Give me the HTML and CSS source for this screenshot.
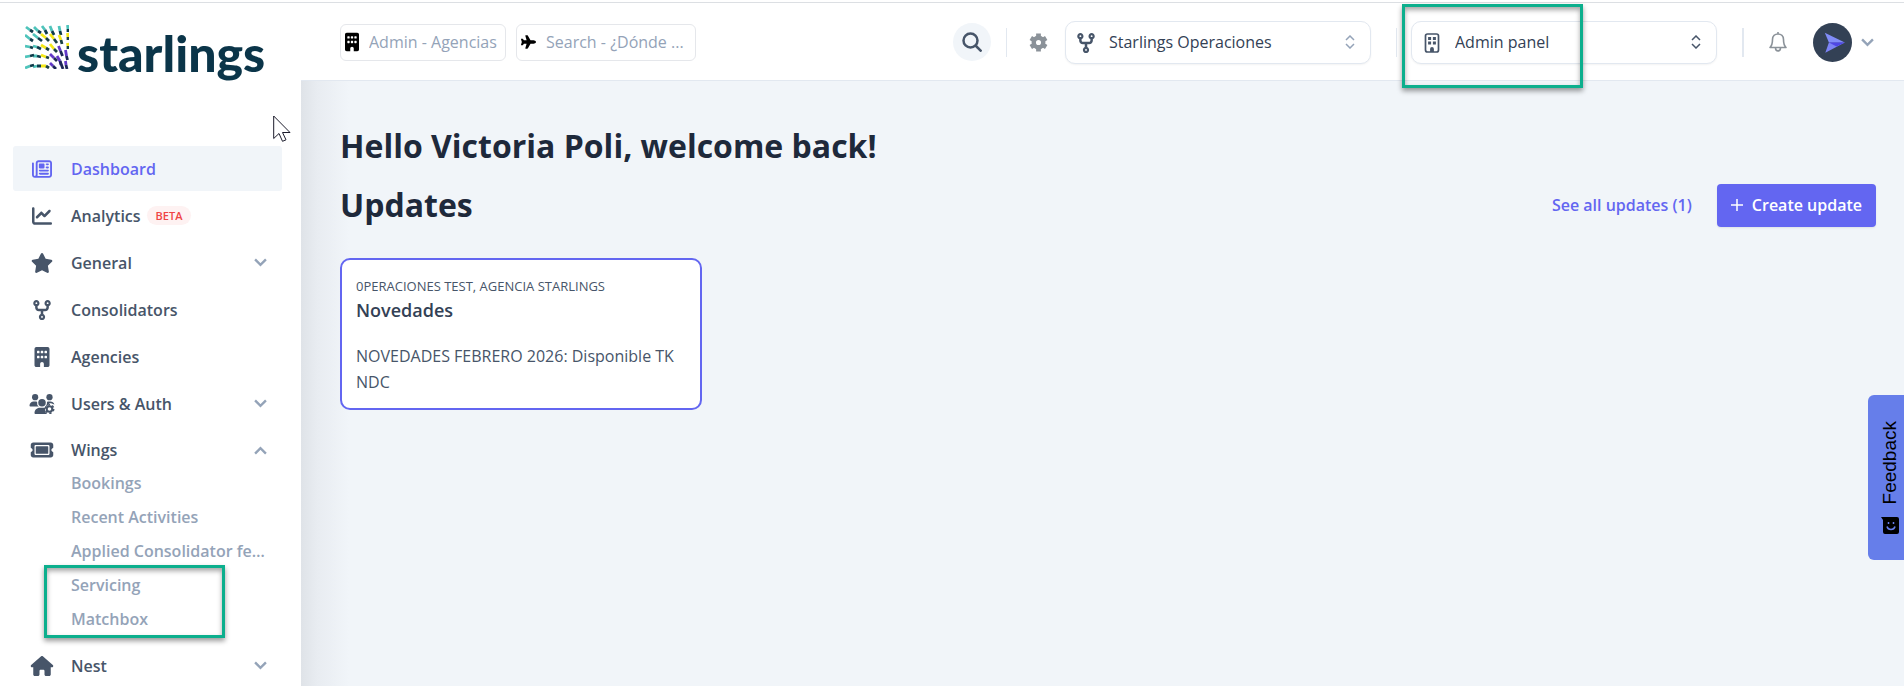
FILE: index.html
```html
<!DOCTYPE html>
<html lang="en">
<head>
  <meta charset="UTF-8" />
  <meta name="viewport" content="width=device-width, initial-scale=1" />
  <title>Starlings - Dashboard</title>
  <link rel="stylesheet" href="styles.css">
</head>
<body>

<!-- Icons -->
<svg class="sprite" aria-hidden="true">
  <symbol id="i-news" viewBox="0 0 512 512"><path d="M168 80c-13.3 0-24 10.7-24 24V408c0 8.4-1.4 16.5-4.1 24H440c13.3 0 24-10.7 24-24V104c0-13.3-10.7-24-24-24H168zM72 480c-39.8 0-72-32.2-72-72V112C0 98.7 10.7 88 24 88s24 10.7 24 24V408c0 13.3 10.7 24 24 24s24-10.7 24-24V104c0-39.8 32.2-72 72-72H440c39.8 0 72 32.2 72 72V408c0 39.8-32.2 72-72 72H72zM176 136c0-13.3 10.7-24 24-24h96c13.3 0 24 10.7 24 24v80c0 13.3-10.7 24-24 24H200c-13.3 0-24-10.7-24-24V136zm200-24h32c13.3 0 24 10.7 24 24s-10.7 24-24 24H376c-13.3 0-24-10.7-24-24s10.7-24 24-24zm0 80h32c13.3 0 24 10.7 24 24s-10.7 24-24 24H376c-13.3 0-24-10.7-24-24s10.7-24 24-24zM200 272H408c13.3 0 24 10.7 24 24s-10.7 24-24 24H200c-13.3 0-24-10.7-24-24s10.7-24 24-24zm0 80H408c13.3 0 24 10.7 24 24s-10.7 24-24 24H200c-13.3 0-24-10.7-24-24s10.7-24 24-24z"/></symbol>
  <symbol id="i-chart" viewBox="0 0 512 512"><path d="M64 64c0-17.7-14.3-32-32-32S0 46.3 0 64V400c0 44.2 35.8 80 80 80H480c17.7 0 32-14.3 32-32s-14.3-32-32-32H80c-8.8 0-16-7.2-16-16V64zm406.6 86.6c12.5-12.5 12.5-32.8 0-45.3s-32.8-12.5-45.3 0L320 210.7l-57.4-57.4c-12.5-12.5-32.8-12.5-45.3 0l-112 112c-12.5 12.5-12.5 32.8 0 45.3s32.8 12.5 45.3 0L240 221.3l57.4 57.4c12.5 12.5 32.8 12.5 45.3 0l128-128z"/></symbol>
  <symbol id="i-star" viewBox="0 0 576 512"><path d="M316.9 18C311.6 7 300.4 0 288.1 0s-23.4 7-28.8 18L195 150.3 51.4 171.5c-12 1.8-22 10.2-25.7 21.7s-.7 24.2 7.9 32.7L137.8 329 113.2 474.7c-2 12 3 24.2 12.9 31.3s23 8 33.8 2.3l128.3-68.5 128.3 68.5c10.8 5.7 23.9 4.9 33.8-2.3s14.9-19.3 12.9-31.3L438.5 329 542.7 225.9c8.6-8.5 11.7-21.2 7.9-32.7s-13.7-19.9-25.7-21.7L381.2 150.3 316.9 18z"/></symbol>
  <symbol id="i-fork" viewBox="0 0 448 512"><path d="M80 104a24 24 0 1 0 0-48 24 24 0 1 0 0 48zm80-24c0 32.8-19.7 61-48 73.3V192c0 17.7 14.3 32 32 32H304c17.7 0 32-14.3 32-32V153.3C307.7 141 288 112.8 288 80c0-44.2 35.8-80 80-80s80 35.8 80 80c0 32.8-19.7 61-48 73.3V192c0 53-43 96-96 96H256v70.7c28.3 12.3 48 40.5 48 73.3c0 44.2-35.8 80-80 80s-80-35.8-80-80c0-32.8 19.7-61 48-73.3V288H144c-53 0-96-43-96-96V153.3C19.7 141 0 112.8 0 80C0 35.8 35.8 0 80 0s80 35.8 80 80zm208 24a24 24 0 1 0 0-48 24 24 0 1 0 0 48zM248 432a24 24 0 1 0 -48 0 24 24 0 1 0 48 0z"/></symbol>
  <symbol id="i-building" viewBox="0 0 384 512"><path d="M48 0C21.5 0 0 21.5 0 48V464c0 26.5 21.5 48 48 48h96V432c0-26.5 21.5-48 48-48s48 21.5 48 48v80h96c26.5 0 48-21.5 48-48V48c0-26.5-21.5-48-48-48H48zM64 240c0-8.8 7.2-16 16-16h32c8.8 0 16 7.2 16 16v32c0 8.8-7.2 16-16 16H80c-8.8 0-16-7.2-16-16V240zm112-16h32c8.8 0 16 7.2 16 16v32c0 8.8-7.2 16-16 16H176c-8.8 0-16-7.2-16-16V240c0-8.8 7.2-16 16-16zm80 16c0-8.8 7.2-16 16-16h32c8.8 0 16 7.2 16 16v32c0 8.8-7.2 16-16 16H272c-8.8 0-16-7.2-16-16V240zM80 96h32c8.8 0 16 7.2 16 16v32c0 8.8-7.2 16-16 16H80c-8.8 0-16-7.2-16-16V112c0-8.8 7.2-16 16-16zm80 16c0-8.8 7.2-16 16-16h32c8.8 0 16 7.2 16 16v32c0 8.8-7.2 16-16 16H176c-8.8 0-16-7.2-16-16V112zM272 96h32c8.8 0 16 7.2 16 16v32c0 8.8-7.2 16-16 16H272c-8.8 0-16-7.2-16-16V112c0-8.8 7.2-16 16-16z"/></symbol>
  <symbol id="i-building-o" viewBox="0 0 15 20">
    <rect x="1" y="1" width="13" height="18" rx="2" fill="none" stroke="currentColor" stroke-width="1.7"/>
    <path d="M3.6 4h3v3h-3zM8.4 4h3v3h-3zM3.6 8.6h3v3h-3zM8.4 8.6h3v3h-3zM5.6 19v-3a1.9 1.9 0 0 1 3.8 0v3z"/>
  </symbol>
  <symbol id="i-users" viewBox="0 0 640 512">
    <circle cx="144" cy="80" r="80"/><circle cx="512" cy="80" r="80"/><circle cx="320" cy="224" r="96"/>
    <path d="M0 299c0-59 48-107 107-107h43c16 0 31 4 45 10a128 128 0 0 0 42 118H21c-12 0-21-10-21-21zM405 320c28-24 45-60 43-118 13-6 28-10 43-10h43c50 0 90 30 104 76l-38-14c-60-30-100-10-130 30l-20 36zM128 485c0-74 60-133 133-133h118c10 0 20 1 28 3-25 60-5 120 44 157H155c-15 0-27-12-27-27z"/>
    <g fill="none" stroke="currentColor"><circle cx="512" cy="384" r="72" stroke-width="52"/><circle cx="512" cy="384" r="108" stroke-width="40" stroke-dasharray="58 55"/></g>
  </symbol>
  <symbol id="i-ticket" viewBox="0 0 576 512"><path d="M64 64C28.7 64 0 92.7 0 128v64c0 8.8 7.4 15.7 15.7 18.6C34.5 217.1 48 235 48 256s-13.5 38.9-32.3 45.4C7.4 304.3 0 311.2 0 320v64c0 35.3 28.7 64 64 64H512c35.3 0 64-28.7 64-64V320c0-8.8-7.4-15.7-15.7-18.6C541.5 294.9 528 277 528 256s13.5-38.9 32.3-45.4c8.3-2.9 15.7-9.8 15.7-18.6V128c0-35.3-28.7-64-64-64H64zm64 112l0 160c0 8.8 7.2 16 16 16H432c8.8 0 16-7.2 16-16V176c0-8.8-7.2-16-16-16H144c-8.8 0-16 7.2-16 16zM96 160c0-17.7 14.3-32 32-32H448c17.7 0 32 14.3 32 32V352c0 17.7-14.3 32-32 32H128c-17.7 0-32-14.3-32-32V160z"/></symbol>
  <symbol id="i-house" viewBox="0 0 576 512"><path d="M575.8 255.5c0 18-15 32.1-32 32.1h-32l.7 160.2c0 2.7-.2 5.4-.5 8.1V472c0 22.1-17.9 40-40 40H456c-1.1 0-2.2 0-3.3-.1c-1.4 .1-2.8 .1-4.2 .1H416 392c-22.1 0-40-17.9-40-40V448 384c0-17.7-14.3-32-32-32H256c-17.7 0-32 14.3-32 32v64 24c0 22.1-17.9 40-40 40H160 128.1c-1.5 0-3-.1-4.5-.2c-1.2 .1-2.4 .2-3.6 .2H104c-22.1 0-40-17.9-40-40V360c0-.9 0-1.9 .1-2.8V287.6H32c-18 0-32-14-32-32.1c0-9 3-17 10-24L266.4 8c7-7 15-8 22-8s15 2 21 7L564.8 231.5c8 7 12 15 11 24z"/></symbol>
  <symbol id="i-plane" viewBox="0 0 576 512"><path d="M482.3 192c34.2 0 93.7 29 93.7 64c0 36-59.5 64-93.7 64l-116.6 0L265.2 495.9c-5.7 10-16.3 16.1-27.8 16.1l-56.2 0c-10.6 0-18.3-10.2-15.4-20.4l49-171.6L112 320 68.8 377.6c-3 4-7.8 6.4-12.8 6.4l-42 0c-7.8 0-14-6.3-14-14c0-1.3 .2-2.6 .5-3.9L32 256 .5 145.9c-.4-1.3-.5-2.6-.5-3.9c0-7.8 6.3-14 14-14l42 0c5 0 9.8 2.4 12.8 6.4L112 192l102.9 0-49-171.6C162.9 10.2 170.6 0 181.2 0l56.2 0c11.5 0 22.1 6.2 27.8 16.1L365.7 192l116.6 0z"/></symbol>
  <symbol id="i-gear" viewBox="0 0 20 20">
    <circle cx="10" cy="10" r="5" fill="none" stroke="currentColor" stroke-width="4.6"/>
    <g fill="none" stroke="currentColor" stroke-width="5" stroke-linejoin="round">
      <path d="M10 .6v4M10 15.4v4M1.9 5.3l3.4 2M14.7 12.7l3.4 2M1.9 14.7l3.4-2M14.7 7.3l3.4-2"/>
    </g>
  </symbol>
  <symbol id="i-down" viewBox="0 0 12 8"><path d="M1 1.2l5 5 5-5" fill="none" stroke="currentColor" stroke-width="2.2"/></symbol>
  <symbol id="i-up" viewBox="0 0 12 8"><path d="M1 6.8l5-5 5 5" fill="none" stroke="currentColor" stroke-width="2.2"/></symbol>
  <symbol id="i-updown" viewBox="0 0 10 14"><path d="M1 5l4-4 4 4M1 9l4 4 4-4" fill="none" stroke="currentColor" stroke-width="1.5"/></symbol>
</svg>

<div class="layout">

  <!-- Sidebar -->
  <aside class="sidebar">
    <a class="logo" href="#">
      <svg class="logo-mark line-icon" viewBox="0 0 44 44" aria-hidden="true">
        <g stroke-width="2.8">
          <path stroke="#4fc4bb" d="M1 2l4 3M9 2l4 4M17 1l3 4M25 1l2 5M34 1l1 5M42.500 0l.5 4M0 10l5 4M8 9l5 4M0 21l5 1M8 21l4 1M0 32l5-1M8 31h4M0 43l5-2M8 42l4-1"/>
          <path stroke="#0f3b4a" d="M5 5l3 2M13 6l3 2M20 5l2 4M27 6l2 4M35 6l1 4M43 4v3M5 14l3 2M13 13l4 3M5 22l3 1M12 22l4 2M5 31l4-1M12 31l4 1M5 41l4-1M12 41h4"/>
          <path stroke="#f4e818" d="M16 9l5 4M25 9l4 5M34 10l2 5M42.500 8l.5 4M16 20l5 3M25 19l4 5M16 30l5 2M16 41h5M42.500 18l.5 3"/>
          <path stroke="#1c4045" d="M21 13l3 3M29 14l3 4M36 15l1 4M43 12v3M21 23l3 2M29 24l3 3M21 32l3 1M21 41l3 2M43 21v3"/>
          <path stroke="#6238c8" d="M33.500 21l2 5M25 29l4 4M32 31l3 5M40.500 25l1 6M25 38l3 3M35 36l1 4M40.500 36l.5 4"/>
          <path stroke="#1d2657" d="M35.500 26l2 5M29 33l3 3M35 36l3 8M41.500 31l1 4M28 41l3 3M41 40l1 4"/>
        </g>
      </svg>
      <span>starlings</span>
    </a>

    <ul class="menu">
      <li><a class="active" href="#"><svg class="icon"><use href="#i-news"/></svg>Dashboard</a></li>
      <li><a href="#"><svg class="icon"><use href="#i-chart"/></svg>Analytics <span class="beta">BETA</span></a></li>
      <li><a href="#"><svg class="icon"><use href="#i-star"/></svg>General<svg class="caret"><use href="#i-down"/></svg></a></li>
      <li><a href="#"><svg class="icon"><use href="#i-fork"/></svg>Consolidators</a></li>
      <li><a href="#"><svg class="icon"><use href="#i-building"/></svg>Agencies</a></li>
      <li><a href="#"><svg class="icon"><use href="#i-users"/></svg>Users &amp; Auth<svg class="caret"><use href="#i-down"/></svg></a></li>
      <li>
        <a class="open" href="#"><svg class="icon"><use href="#i-ticket"/></svg>Wings<svg class="caret"><use href="#i-up"/></svg></a>
        <ul class="submenu">
          <li><a href="#">Bookings</a></li>
          <li><a href="#">Recent Activities</a></li>
          <li><a href="#">Applied Consolidator fees</a></li>
          <li><a href="#">Servicing</a></li>
          <li><a href="#">Matchbox</a></li>
          <li class="highlight highlight-menu" aria-hidden="true"></li>
        </ul>
      </li>
      <li><a href="#"><svg class="icon"><use href="#i-house"/></svg>Nest<svg class="caret"><use href="#i-down"/></svg></a></li>
    </ul>

    <svg class="cursor" viewBox="0 0 18 27" aria-hidden="true"><path d="M.7 1v22.500l5.300-5 3.500 7.800 3.500-1.500-3.500-7.300h7.500z" fill="#fff" stroke="#1b1b2b"/></svg>
  </aside>

  <div class="content">

    <!-- Header -->
    <header class="header">
      <label class="quick quick-admin">
        <svg class="quick-building"><use href="#i-building"/></svg>
        <input type="text" placeholder="Admin - Agencias" aria-label="Admin - Agencias" />
      </label>
      <label class="quick quick-search">
        <svg class="quick-plane"><use href="#i-plane"/></svg>
        <input type="text" placeholder="Search - ¿Dónde ..." aria-label="Search" />
      </label>

      <button class="search-btn" aria-label="Search">
        <svg class="line-icon" viewBox="0 0 20 20" stroke-width="2.500"><circle cx="8.500" cy="8.500" r="7"/><path d="M13.500 13.500l6 6"/></svg>
      </button>
      <span class="divider"></span>
      <button class="gear-btn" aria-label="Settings"><svg><use href="#i-gear"/></svg></button>
      <div class="picker">
        <svg class="picker-icon"><use href="#i-fork"/></svg>
        <select aria-label="Consolidator"><option>Starlings Operaciones</option></select>
        <svg class="picker-arrows muted"><use href="#i-updown"/></svg>
      </div>
      <span class="divider divider-mid"></span>
      <div class="picker picker-panel">
        <svg class="picker-icon"><use href="#i-building-o"/></svg>
        <select aria-label="Panel"><option>Admin panel</option></select>
        <svg class="picker-arrows"><use href="#i-updown"/></svg>
        <span class="highlight highlight-panel" aria-hidden="true"></span>
      </div>
      <span class="divider divider-end"></span>
      <button class="bell-btn" aria-label="Notifications">
        <svg class="line-icon" viewBox="0 0 18 20" stroke-width="1.600" stroke-linejoin="round"><path d="M1 15.500c2-2 2.500-4 2.500-8C3.500 4 6 2 9 2s5.500 2 5.500 5.500c0 4 .5 6 2.500 8zM9 0v2M6.500 16c0 3.800 5 3.800 5 0"/></svg>
      </button>
      <button class="user-btn" aria-label="Account">
        <svg class="avatar" viewBox="0 0 38 38">
          <circle cx="19" cy="19" r="19" fill="#334155"/>
          <path d="M11.500 9.500L31 19H15.500z" fill="#818cf8"/>
          <path d="M15.500 19H31L12 29z" fill="#7c83f5"/>
          <path d="M15.500 19H31l-8 4z" fill="#4f46e5"/>
        </svg>
        <svg class="caret"><use href="#i-down"/></svg>
      </button>
    </header>

    <!-- Dashboard -->
    <main class="main">
      <h1>Hello Victoria Poli, welcome back!</h1>
      <div class="section-head">
        <h2>Updates</h2>
        <a class="see-all" href="#">See all updates (1)</a>
        <button class="create-btn">
          <svg class="line-icon" viewBox="0 0 12 12" stroke-width="1.500"><path d="M6 0v12M0 6h12"/></svg>
          Create update
        </button>
      </div>

      <article class="card">
        <p class="card-tags">0PERACIONES TEST, AGENCIA STARLINGS</p>
        <h3>Novedades</h3>
        <p class="card-text">NOVEDADES FEBRERO 2026: Disponible TK NDC</p>
      </article>
    </main>
  </div>
</div>

<button class="feedback">
  <svg viewBox="0 0 18 17"><path d="M0 0h16a2 2 0 0 1 2 2v13a2 2 0 0 1-2 2H4a2 2 0 0 1-2-2V3z"/><g fill="none" stroke="#667eea" stroke-width="1.500"><path d="M6 9.500c1 4 7 4 8 0M7.500 5v2M12.500 5v2"/></g></svg>
  <span>Feedback</span>
</button>

</body>
</html>
```

FILE: styles.css
```css
* { box-sizing: border-box; }
body {
  margin: 0;
  padding-top: 2px;
  font-family: "Open Sans", "Noto Sans", sans-serif;
  font-size: 16px;
  color: #1e293b;
  background: #fff;
}
a { text-decoration: none; color: inherit; }
ul { list-style: none; margin: 0; padding: 0; }
h1, h2, h3, p { margin: 0; }
button {
  border: 0;
  padding: 0;
  background: none;
  font: inherit;
  color: inherit;
  cursor: pointer;
}
svg { display: block; fill: currentColor; flex: none; }
.line-icon { fill: none; stroke: currentColor; }
.sprite { position: absolute; width: 0; height: 0; }

.layout {
  display: flex;
  min-height: calc(100vh - 2px);
  border-top: 1px solid #dcdfe3;
}

/* Sidebar */
.sidebar {
  position: relative;
  flex: none;
  width: 301px;
  padding: 12px 19px 0 13px;
}
.logo {
  display: flex;
  height: 131px;
  padding-left: 12px;
  gap: 8px;
  color: #0b3549;
  font-family: Lato, sans-serif;
  font-size: 50px;
  font-weight: 900;
  line-height: 60px;
}
.logo-mark { width: 44px; height: 44px; margin-top: 10px; }
.logo span { margin-top: 8px; }
.menu > li { margin-bottom: 2px; }
.menu a {
  display: flex;
  align-items: center;
  height: 45px;
  padding: 0 15px;
  border-radius: 3px;
  font-size: 16px;
  font-weight: 600;
  color: #475569;
}
.menu a.active { background: #f1f5f9; color: #6366f1; }
.menu a.open { height: 38px; padding-top: 6px; }
.icon { width: 28px; height: 20px; margin-right: 15px; }
.caret { width: 13px; height: 9px; color: #94a3b8; }
.menu .caret { margin-left: auto; }
.beta {
  margin-left: 6px;
  padding: 0 9px;
  border-radius: 10px;
  background: #fef2f2;
  color: #ef4444;
  font-size: 11px;
  line-height: 19px;
}
.submenu { position: relative; padding-bottom: 5px; }
.submenu a {
  display: block;
  height: 34px;
  line-height: 34px;
  padding: 0 15px 0 58px;
  color: #94a3b8;
  overflow: hidden;
  white-space: nowrap;
  text-overflow: ellipsis;
}
.cursor {
  position: absolute;
  left: 273px;
  top: 112px;
  width: 18px;
  height: 27px;
}

/* Marked areas */
.highlight {
  position: absolute;
  z-index: 5;
  border: 3px solid #0caf8d;
  box-shadow: 0 3px 5px rgba(0,0,0,0.4), inset 0 3px 5px rgba(0,0,0,0.35);
  pointer-events: none;
}
.highlight-menu { left: 31px; top: 99px; width: 181px; height: 73px; }
.highlight-panel { left: -9px; top: -17px; width: 181px; height: 84px; }

/* Header */
.content { flex: 1; min-width: 0; display: flex; flex-direction: column; }
.header {
  display: flex;
  align-items: center;
  height: 78px;
  padding: 1px 30px 0 39px;
  border-bottom: 1px solid #e2e8f0;
}
.quick {
  display: flex;
  align-items: center;
  height: 37px;
  padding-left: 4px;
  border: 1px solid #e5e7eb;
  border-radius: 6px;
  color: #000;
}
.quick-admin { width: 166px; margin-right: 10px; }
.quick-search { width: 180px; margin-right: auto; }
.quick-building { width: 14px; height: 20px; margin-right: 10px; }
.quick-plane { width: 15px; height: 14px; margin-right: 10px; }
.quick input {
  flex: 1;
  min-width: 0;
  border: 0;
  padding: 0;
  background: none;
  font: inherit;
  outline: none;
}
.quick input::placeholder { color: #94a3b8; opacity: 1; }
.search-btn {
  display: flex;
  align-items: center;
  justify-content: center;
  width: 38px;
  height: 38px;
  border-radius: 50%;
  background: #f1f5f9;
  color: #475569;
}
.search-btn svg { width: 20px; height: 20px; }
.divider { width: 1px; height: 29px; margin: 0 22px 0 15px; background: #e2e8f0; }
.divider-mid { margin: 0 14px 0 25px; }
.divider-end { width: 2px; margin: 0 25px; }
.gear-btn { color: #8b9299; margin-right: 17px; }
.gear-btn svg { width: 19px; height: 19px; }
.picker { position: relative; width: 306px; height: 43px; color: #475569; }
.picker select {
  appearance: none;
  width: 100%;
  height: 100%;
  padding: 0 40px 0 43px;
  border: 1px solid #e2e8f0;
  border-radius: 10px;
  background: #fff;
  box-shadow: 0 1px 2px rgba(0,0,0,0.05);
  font: inherit;
  color: #334155;
}
.picker-icon { position: absolute; left: 12px; top: 12px; width: 18px; height: 20px; }
.picker-arrows { position: absolute; right: 16px; top: 14px; width: 10px; height: 14px; }
.picker-arrows.muted { color: #94a3b8; }
.bell-btn { color: #8b9299; margin-right: 26px; }
.bell-btn svg { width: 18px; height: 20px; }
.user-btn { display: flex; align-items: center; gap: 9px; }
.avatar { width: 39px; height: 39px; }

/* Dashboard */
.main {
  flex: 1;
  padding: 41px 28px 40px 39px;
  background: linear-gradient(to right, #dfe3e8, #e8ecf1 16px, #f1f5f9 48px);
}
h1, h2 { font-size: 32px; font-weight: 700; line-height: 48px; }
.section-head { display: flex; align-items: center; margin-top: 11px; }
.see-all {
  margin-left: auto;
  margin-right: 25px;
  color: #6366f1;
  font-weight: 600;
}
.create-btn {
  display: flex;
  align-items: center;
  gap: 9px;
  height: 43px;
  padding: 0 14px;
  border-radius: 4px;
  background: #6366f1;
  box-shadow: 0 1px 2px rgba(0,0,0,0.08);
  color: #fff;
  font-weight: 600;
}
.create-btn svg { width: 12px; height: 12px; }
.card {
  width: 362px;
  margin-top: 29px;
  padding: 15px 14px 13px;
  border: 2px solid #6366f1;
  border-radius: 10px;
  background: #fff;
}
.card-tags { font-size: 13px; line-height: 22px; color: #475569; }
.card h3 { font-size: 18px; font-weight: 600; line-height: 26px; color: #334155; }
.card-text { margin-top: 20px; font-size: 16px; line-height: 26px; color: #475569; }

/* Feedback tab */
.feedback {
  position: fixed;
  right: 0;
  top: 395px;
  display: flex;
  flex-direction: column-reverse;
  align-items: center;
  justify-content: center;
  gap: 13px;
  width: 36px;
  height: 165px;
  padding: 0 0 0 8px;
  border-radius: 6px 0 0 6px;
  background: #667eea;
  color: #000;
  font-family: "Liberation Sans", sans-serif;
  font-size: 19px;
}
.feedback span { writing-mode: vertical-rl; transform: rotate(180deg); }
.feedback svg { width: 18px; height: 17px; }
```
